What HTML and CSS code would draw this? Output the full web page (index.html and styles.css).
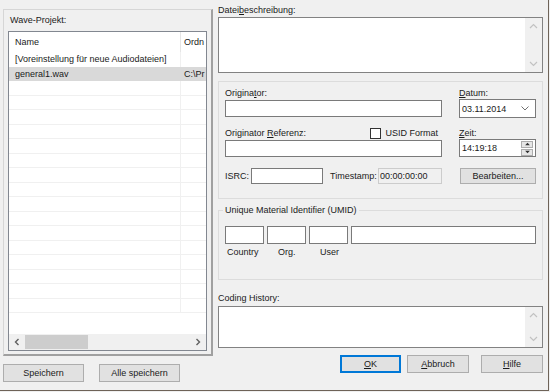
FILE: index.html
```html
<!DOCTYPE html>
<html lang="de">
<head>
  <meta charset="UTF-8">
  <title>Wave-Projekt</title>
  <link rel="stylesheet" href="styles.css">
</head>
<body>
  <div class="dialog">
    <div class="left">
      <div class="project">
        <div class="project-label">Wave-Projekt:</div>
        <div class="list">
          <div class="list-head">
            <span class="col-name">Name</span>
            <span class="col-dir">Ordn</span>
          </div>
          <div class="list-body">
            <div class="row"><span class="col-name">[Voreinstellung für neue Audiodateien]</span><span class="col-dir"></span></div>
            <div class="row selected"><span class="col-name">general1.wav</span><span class="col-dir">C:\Pr</span></div>
            <div class="row empty"><span class="col-name"></span><span class="col-dir"></span></div>
            <div class="row empty"><span class="col-name"></span><span class="col-dir"></span></div>
            <div class="row empty"><span class="col-name"></span><span class="col-dir"></span></div>
            <div class="row empty"><span class="col-name"></span><span class="col-dir"></span></div>
            <div class="row empty"><span class="col-name"></span><span class="col-dir"></span></div>
            <div class="row empty"><span class="col-name"></span><span class="col-dir"></span></div>
            <div class="row empty"><span class="col-name"></span><span class="col-dir"></span></div>
            <div class="row empty"><span class="col-name"></span><span class="col-dir"></span></div>
            <div class="row empty"><span class="col-name"></span><span class="col-dir"></span></div>
            <div class="row empty"><span class="col-name"></span><span class="col-dir"></span></div>
            <div class="row empty"><span class="col-name"></span><span class="col-dir"></span></div>
            <div class="row empty"><span class="col-name"></span><span class="col-dir"></span></div>
            <div class="row empty"><span class="col-name"></span><span class="col-dir"></span></div>
            <div class="row empty"><span class="col-name"></span><span class="col-dir"></span></div>
            <div class="row empty"><span class="col-name"></span><span class="col-dir"></span></div>
            <div class="row empty"><span class="col-name"></span><span class="col-dir"></span></div>
          </div>
          <div class="hscroll">
            <svg class="arrow" width="16" height="16" viewBox="0 0 16 16"><polyline points="9.5,5 6.5,8 9.5,11" fill="none" stroke="#606060" stroke-width="1.4"/></svg>
            <div class="track"><div class="thumb"></div></div>
            <svg class="arrow" width="16" height="16" viewBox="0 0 16 16"><polyline points="6.5,5 9.5,8 6.5,11" fill="none" stroke="#606060" stroke-width="1.4"/></svg>
          </div>
        </div>
      </div>
      <div class="buttons left-buttons">
        <button class="btn btn-save">Speichern</button>
        <button class="btn btn-saveall">Alle speichern</button>
      </div>
    </div>

    <div class="right">
      <div class="field-label">Datei<u>b</u>eschreibung:</div>
      <div class="memo memo-desc">
        <div class="vscroll">
          <svg width="17" height="14" viewBox="0 0 17 14"><polyline points="5,9 8.5,5.5 12,9" fill="none" stroke="#c2c2c2" stroke-width="1.2"/></svg>
          <svg width="17" height="14" viewBox="0 0 17 14"><polyline points="5,5 8.5,8.5 12,5" fill="none" stroke="#c2c2c2" stroke-width="1.2"/></svg>
        </div>
      </div>

      <div class="box info">
        <div class="grid">
          <div class="lbl">Origina<u>t</u>or:</div>
          <div class="lbl"><u>D</u>atum:</div>
          <div class="input wide"></div>
          <div class="combo">
            <span>03.11.2014</span>
            <svg width="8" height="5" viewBox="0 0 8 5"><polyline points="0.5,0.5 4,4 7.5,0.5" fill="none" stroke="#707070" stroke-width="1"/></svg>
          </div>
          <div class="lbl lbl-ref">
            <span>Originator <u>R</u>eferenz:</span>
            <span class="check"><span class="checkbox"></span>USID Format</span>
          </div>
          <div class="lbl"><u>Z</u>eit:</div>
          <div class="input wide"></div>
          <div class="combo time">
            <span>14:19:18</span>
            <span class="spin">
              <span class="spin-btn"><svg width="9" height="5" viewBox="0 0 9 5"><polygon points="1.5,4 4.5,1 7.5,4" fill="#303030"/></svg></span>
              <span class="spin-btn"><svg width="9" height="5" viewBox="0 0 9 5"><polygon points="1.5,1 4.5,4 7.5,1" fill="#303030"/></svg></span>
            </span>
          </div>
        </div>
        <div class="isrc-row">
          <span class="isrc-label">ISRC:</span>
          <span class="input isrc"></span>
          <span class="ts-label">Timestamp:</span>
          <span class="input ts">00:00:00:00</span>
          <button class="btn btn-edit">Bearbeiten...</button>
        </div>
      </div>

      <div class="umid">
        <div class="umid-title">Unique Material Identifier (UMID)</div>
        <div class="umid-fields">
          <div class="input u-small"></div>
          <div class="input u-small"></div>
          <div class="input u-small"></div>
          <div class="input u-big"></div>
        </div>
        <div class="umid-labels">
          <span class="u-country">Country</span>
          <span class="u-org">Org.</span>
          <span class="u-user">User</span>
        </div>
      </div>

      <div class="field-label coding-label">Coding History:</div>
      <div class="memo memo-coding">
        <div class="vscroll">
          <svg width="17" height="14" viewBox="0 0 17 14"><polyline points="5,9 8.5,5.5 12,9" fill="none" stroke="#c2c2c2" stroke-width="1.2"/></svg>
          <svg width="17" height="14" viewBox="0 0 17 14"><polyline points="5,5 8.5,8.5 12,5" fill="none" stroke="#c2c2c2" stroke-width="1.2"/></svg>
        </div>
      </div>

      <div class="buttons right-buttons">
        <button class="btn btn-ok"><u>O</u>K</button>
        <button class="btn btn-cancel"><u>A</u>bbruch</button>
        <button class="btn btn-help"><u>H</u>ilfe</button>
      </div>
    </div>
  </div>
</body>
</html>
```

FILE: styles.css
```css
* {
  box-sizing: border-box;
}
body {
  margin: 0;
  background: #f0f0f0;
  font-family: "Liberation Sans", Arial, sans-serif;
  font-size: 9px;
  color: #1a1a1a;
}
u {
  text-decoration: underline;
  text-underline-offset: 1px;
}
.dialog {
  width: 549px;
  height: 391px;
  display: flex;
  border-right: 1px solid #6e6358;
  border-bottom: 1px solid #6e6358;
}

/* linke Seite */
.left {
  width: 213px;
  padding-top: 9px;
}
.project {
  margin-left: 3px;
  width: 210px;
  height: 347px;
  border: 1px solid #d6d6d6;
  border-right: 2px solid #a0a0a0;
  border-bottom: 2px solid #a0a0a0;
  padding: 0 3px 0 4px;
}
.project-label {
  height: 21px;
  line-height: 12px;
  padding: 4px 0 0 2px;
}
.list {
  width: 199px;
  height: 320px;
  border: 1px solid #828790;
  background: #fff;
  display: flex;
  flex-direction: column;
  overflow: hidden;
}
.list-head {
  display: flex;
  height: 20px;
  line-height: 20px;
  flex-shrink: 0;
}
.list-head .col-name {
  border-right: 1px solid #e5e5e5;
}
.col-name {
  width: 172px;
  flex-shrink: 0;
  padding-left: 6px;
  white-space: nowrap;
}
.col-dir {
  flex: 1;
  padding-left: 3px;
  white-space: nowrap;
  overflow: hidden;
}
.list-body {
  flex: 1;
  overflow: hidden;
}
.row {
  display: flex;
  height: 14.5px;
  line-height: 14px;
  border-bottom: 1px solid #f0f0f0;
}
.row .col-name {
  border-right: 1px solid #f0f0f0;
}
.row:first-child {
  border-bottom: none;
}
.row.selected {
  background: #d9d9d9;
  border-bottom-color: #d9d9d9;
}
.row.selected .col-name {
  border-right-color: #d9d9d9;
}
.hscroll {
  height: 16px;
  flex-shrink: 0;
  display: flex;
  align-items: center;
  background: #f0f0f0;
}
.hscroll .arrow {
  flex-shrink: 0;
}
.track {
  flex: 1;
  height: 16px;
  padding: 1px 0;
}
.thumb {
  width: 63px;
  height: 14px;
  background: #cdcdcd;
}
.left-buttons {
  padding: 8px 0 0 3px;
  gap: 15px;
}

/* Buttons */
.buttons {
  display: flex;
}
.btn {
  font: inherit;
  height: 18px;
  padding: 0;
  background: #e1e1e1;
  border: 1px solid #adadad;
  color: #1a1a1a;
}
.btn-save,
.btn-saveall {
  width: 81px;
}
.btn-ok {
  width: 61px;
  border: 1px solid #0078d7;
  box-shadow: inset 0 0 0 1px #0078d7;
}
.btn-cancel {
  width: 62px;
}
.btn-help {
  width: 62px;
}
.right-buttons {
  justify-content: flex-end;
  gap: 6px;
  margin-top: 7px;
}
.right-buttons .btn-help {
  margin-left: 6px;
}

/* rechte Seite */
.right {
  width: 335px;
  padding: 4px 5px 0 5px;
  display: flex;
  flex-direction: column;
}
.field-label {
  height: 12px;
  line-height: 12px;
}
.memo {
  background: #fff;
  border: 1px solid #828282;
  display: flex;
  justify-content: flex-end;
  flex-shrink: 0;
}
.memo-desc {
  height: 56px;
  margin-top: 1px;
}
.vscroll {
  width: 17px;
  background: #f0f0f0;
  display: flex;
  flex-direction: column;
  justify-content: space-between;
  padding: 1px 0;
}
.vscroll svg {
  display: block;
}

.box {
  border: 1px solid #dcdcdc;
}
.info {
  height: 118px;
  margin-top: 8px;
  padding: 5px 6px 0 6px;
}
.grid {
  display: grid;
  grid-template-columns: 217px 77px;
  column-gap: 17px;
  grid-template-rows: 12px 19px 12px 19px;
}
.grid > :nth-child(3) {
  margin-top: 1px;
}
.grid > :nth-child(5),
.grid > :nth-child(6),
.grid > :nth-child(8) {
  margin-top: 9px;
  margin-bottom: -9px;
}
.lbl {
  line-height: 12px;
}
.lbl-ref {
  display: flex;
  justify-content: space-between;
  padding-right: 4px;
}
.check {
  display: flex;
  align-items: center;
  gap: 4px;
}
.checkbox {
  width: 11px;
  height: 11px;
  border: 1px solid #333;
  background: #fff;
}
.input {
  display: block;
  background: #fff;
  border: 1px solid #7a7a7a;
}
.wide {
  height: 17px;
}
.grid > :nth-child(7) {
  height: 17px;
  margin-top: 10px;
}
.combo {
  height: 19px;
  background: #fff;
  border: 1px solid #7a7a7a;
  display: flex;
  align-items: center;
  justify-content: space-between;
  padding: 0 6px 0 2px;
}
.combo.time {
  height: 18px;
  padding-right: 2px;
}
.spin {
  display: flex;
  flex-direction: column;
  gap: 1px;
}
.spin-btn {
  width: 12px;
  height: 7px;
  background: #e6e6e6;
  border: 1px solid #adadad;
  display: flex;
  align-items: center;
  justify-content: center;
}
.spin-btn svg {
  width: 7px;
  height: 4px;
}
.isrc-row {
  display: flex;
  align-items: center;
  height: 16px;
  margin-top: 19px;
}
.isrc-label {
  width: 26px;
}
.input.isrc {
  width: 72px;
  height: 16px;
}
.ts-label {
  margin-left: 7px;
  width: 48px;
}
.input.ts {
  width: 64px;
  height: 16px;
  background: #f0f0f0;
  border-color: #cccccc;
  line-height: 14px;
  padding-left: 1px;
}
.btn-edit {
  width: 76px;
  height: 16px;
  margin-left: 18px;
}

.umid {
  margin-top: 11px;
  height: 70px;
  border: 1px solid #dcdcdc;
  padding: 0 6px;
}
.umid-title {
  margin: -7px 0 0 -2px;
  padding: 0 2px;
  background: #f0f0f0;
  width: max-content;
  line-height: 12px;
}
.umid-fields {
  display: flex;
  gap: 3px;
  margin-top: 10px;
}
.u-small {
  width: 39px;
  height: 18px;
}
.u-big {
  width: 185px;
  height: 18px;
}
.umid-labels {
  display: flex;
  line-height: 12px;
  margin-top: 2px;
}
.u-country {
  margin-left: 2px;
  width: 51px;
}
.u-org {
  width: 42px;
}
.coding-label {
  margin-top: 12px;
}
.memo-coding {
  height: 42px;
  margin-top: 2px;
}
```
